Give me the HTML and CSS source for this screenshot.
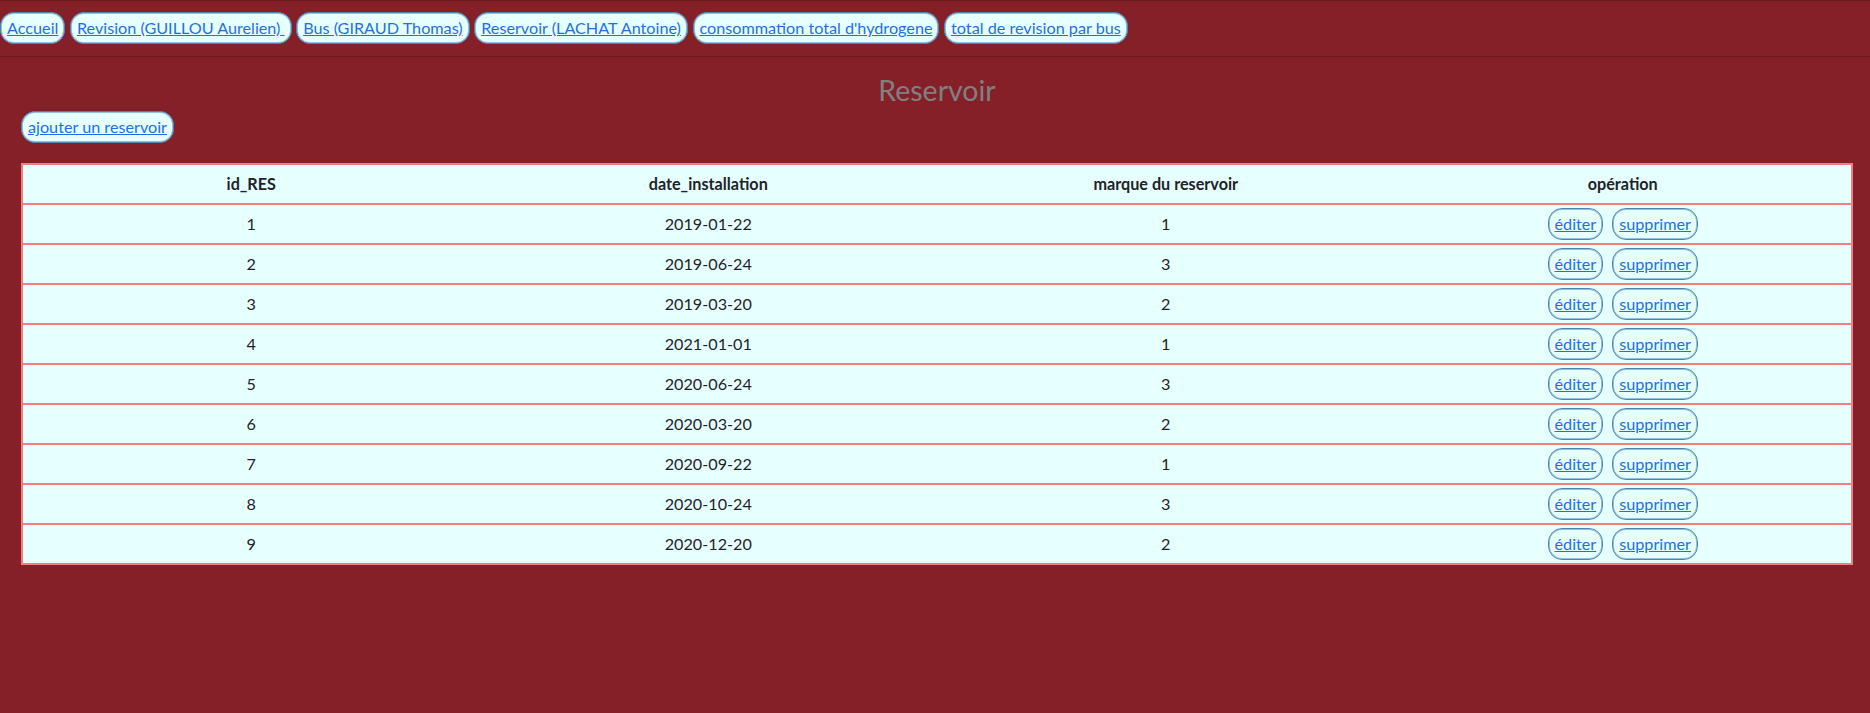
FILE: index.html
```html
<!DOCTYPE html>
<html lang="fr">
<head>
<meta charset="utf-8">
<title>Reservoir</title>
<link rel="stylesheet" href="styles.css">
</head>
<body>
<nav class="topnav">
  <span class="btn"><a href="#">Accueil</a></span>
  <span class="btn"><a href="#">Revision (GUILLOU Aurelien) </a></span>
  <span class="btn"><a href="#">Bus (GIRAUD Thomas)</a></span>
  <span class="btn"><a href="#">Reservoir (LACHAT Antoine)</a></span>
  <span class="btn"><a href="#">consommation total d'hydrogene</a></span>
  <span class="btn"><a href="#">total de revision par bus</a></span>
</nav>
<main class="content">
  <h1 class="title">Reservoir</h1>
  <div class="actions"><span class="btn"><a href="#">ajouter un reservoir</a></span></div>
  <table class="grid">
    <thead>
      <tr><th>id_RES</th><th>date_installation</th><th>marque du reservoir</th><th>opération</th></tr>
    </thead>
    <tbody>
      <tr><td>1</td><td>2019-01-22</td><td>1</td><td><span class="ops"><span class="btn"><a href="#">éditer</a></span><span class="btn"><a href="#">supprimer</a></span></span></td></tr>
      <tr><td>2</td><td>2019-06-24</td><td>3</td><td><span class="ops"><span class="btn"><a href="#">éditer</a></span><span class="btn"><a href="#">supprimer</a></span></span></td></tr>
      <tr><td>3</td><td>2019-03-20</td><td>2</td><td><span class="ops"><span class="btn"><a href="#">éditer</a></span><span class="btn"><a href="#">supprimer</a></span></span></td></tr>
      <tr><td>4</td><td>2021-01-01</td><td>1</td><td><span class="ops"><span class="btn"><a href="#">éditer</a></span><span class="btn"><a href="#">supprimer</a></span></span></td></tr>
      <tr><td>5</td><td>2020-06-24</td><td>3</td><td><span class="ops"><span class="btn"><a href="#">éditer</a></span><span class="btn"><a href="#">supprimer</a></span></span></td></tr>
      <tr><td>6</td><td>2020-03-20</td><td>2</td><td><span class="ops"><span class="btn"><a href="#">éditer</a></span><span class="btn"><a href="#">supprimer</a></span></span></td></tr>
      <tr><td>7</td><td>2020-09-22</td><td>1</td><td><span class="ops"><span class="btn"><a href="#">éditer</a></span><span class="btn"><a href="#">supprimer</a></span></span></td></tr>
      <tr><td>8</td><td>2020-10-24</td><td>3</td><td><span class="ops"><span class="btn"><a href="#">éditer</a></span><span class="btn"><a href="#">supprimer</a></span></span></td></tr>
      <tr><td>9</td><td>2020-12-20</td><td>2</td><td><span class="ops"><span class="btn"><a href="#">éditer</a></span><span class="btn"><a href="#">supprimer</a></span></span></td></tr>
    </tbody>
  </table>
</main>
</body>
</html>
```
FILE: styles.css
```css
html, body {
  margin: 0;
  padding: 0;
}
body {
  background: #852029;
  font-family: "Lato", "Roboto", "Liberation Sans", sans-serif;
  font-size: 16.2px;
  color: #1f2328;
  min-height: 713px;
}

.btn {
  display: inline-flex;
  align-items: center;
  box-sizing: border-box;
  height: 32px;
  padding: 0 5px;
  background: #e6ffff;
  border: 1px solid #5084b0;
  box-shadow: inset 0 0 0 1px #90c2e6;
  border-radius: 14px;
  line-height: 1;
  white-space: pre;
}
.btn a {
  color: #1f6fe8;
  text-decoration: underline;
  padding: 0 1px;
}

.topnav {
  display: flex;
  gap: 4.6px;
  align-items: center;
  border-top: 1px solid #6a1b22;
  border-bottom: 1px solid #6a1b22;
  padding: 11px 0 12px 0;
}

.content {
  padding: 0 17px 0 21px;
}

.title {
  margin: 16px 0 0 0;
  text-align: center;
  font-size: 28.5px;
  line-height: 34px;
  font-weight: normal;
  color: #808080;
}

.actions {
  margin-top: 4px;
  height: 32px;
  display: flex;
}

.grid {
  margin-top: 20px;
  width: 100%;
  table-layout: fixed;
  border-collapse: collapse;
  background: #e6ffff;
}
.grid tr {
  border: 2px solid #f08080;
}
.grid th,
.grid td {
  padding: 3px 0;
  height: 32px;
  line-height: 32px;
  text-align: center;
  vertical-align: middle;
}
.grid th {
  font-weight: bold;
}

.ops {
  display: inline-flex;
  gap: 9px;
  height: 32px;
  vertical-align: top;
}
```
